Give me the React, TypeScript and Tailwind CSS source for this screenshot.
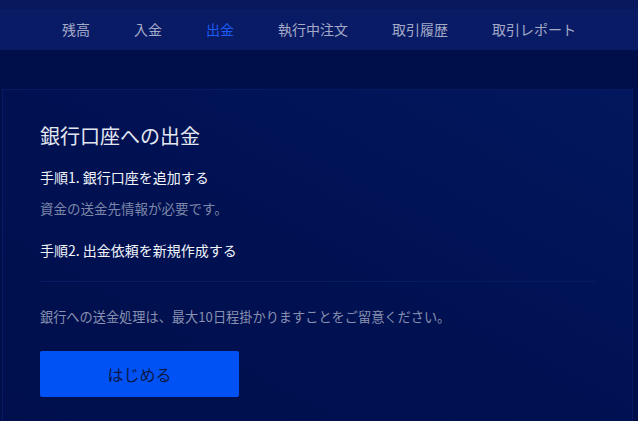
import React from "react";

const tabs = ["残高", "入金", "出金", "執行中注文", "取引履歴", "取引レポート"];

const font = { fontFamily: '"Noto Sans CJK JP", "Noto Sans", sans-serif' };

export default function App() {
  return (
    <div className="min-h-[421px] bg-[#000f4a] overflow-hidden" style={font}>
      <div className="h-[9px] bg-[#07185c]" />
      <nav className="h-[41px] bg-[#0a1b66] flex items-center justify-center gap-[44px] text-[14px]">
        {tabs.map((t) => (
          <span
            key={t}
            className={t === "出金" ? "text-[#1b5cf6]" : "text-[#a3aac6]"}
          >
            {t}
          </span>
        ))}
      </nav>
      <div className="mt-[39px] ml-[2px] mr-[5px] border border-[#071a63] border-b-0 bg-gradient-to-bl from-[#03175e] via-[#001152] to-[#000f4c] pt-[32px] px-[37px] pb-[40px]">
        <h2 className="text-[20px] leading-[28px] text-[#e4e7f1]">銀行口座への出金</h2>
        <p className="mt-[17px] text-[14px] leading-[20px] text-[#f2f4fa]">
          手順1. 銀行口座を追加する
        </p>
        <p className="mt-[11px] text-[13.5px] leading-[20px] text-[#7d86a8]">
          資金の送金先情報が必要です。
        </p>
        <p className="mt-[22px] text-[14px] leading-[20px] text-[#f2f4fa]">
          手順2. 出金依頼を新規作成する
        </p>
        <div className="mt-[21px] h-px bg-[#091b60] mr-[-1px]" />
        <p className="mt-[25px] text-[13.2px] leading-[20px] text-[#8990b0]">
          銀行への送金処理は、最大10日程掛かりますことをご留意ください。
        </p>
        <button className="mt-[24px] w-[199px] h-[46px] rounded-[2px] bg-[#0052f5] text-[16px] text-[#0b1846] flex items-center justify-center">
          はじめる
        </button>
      </div>
    </div>
  );
}
